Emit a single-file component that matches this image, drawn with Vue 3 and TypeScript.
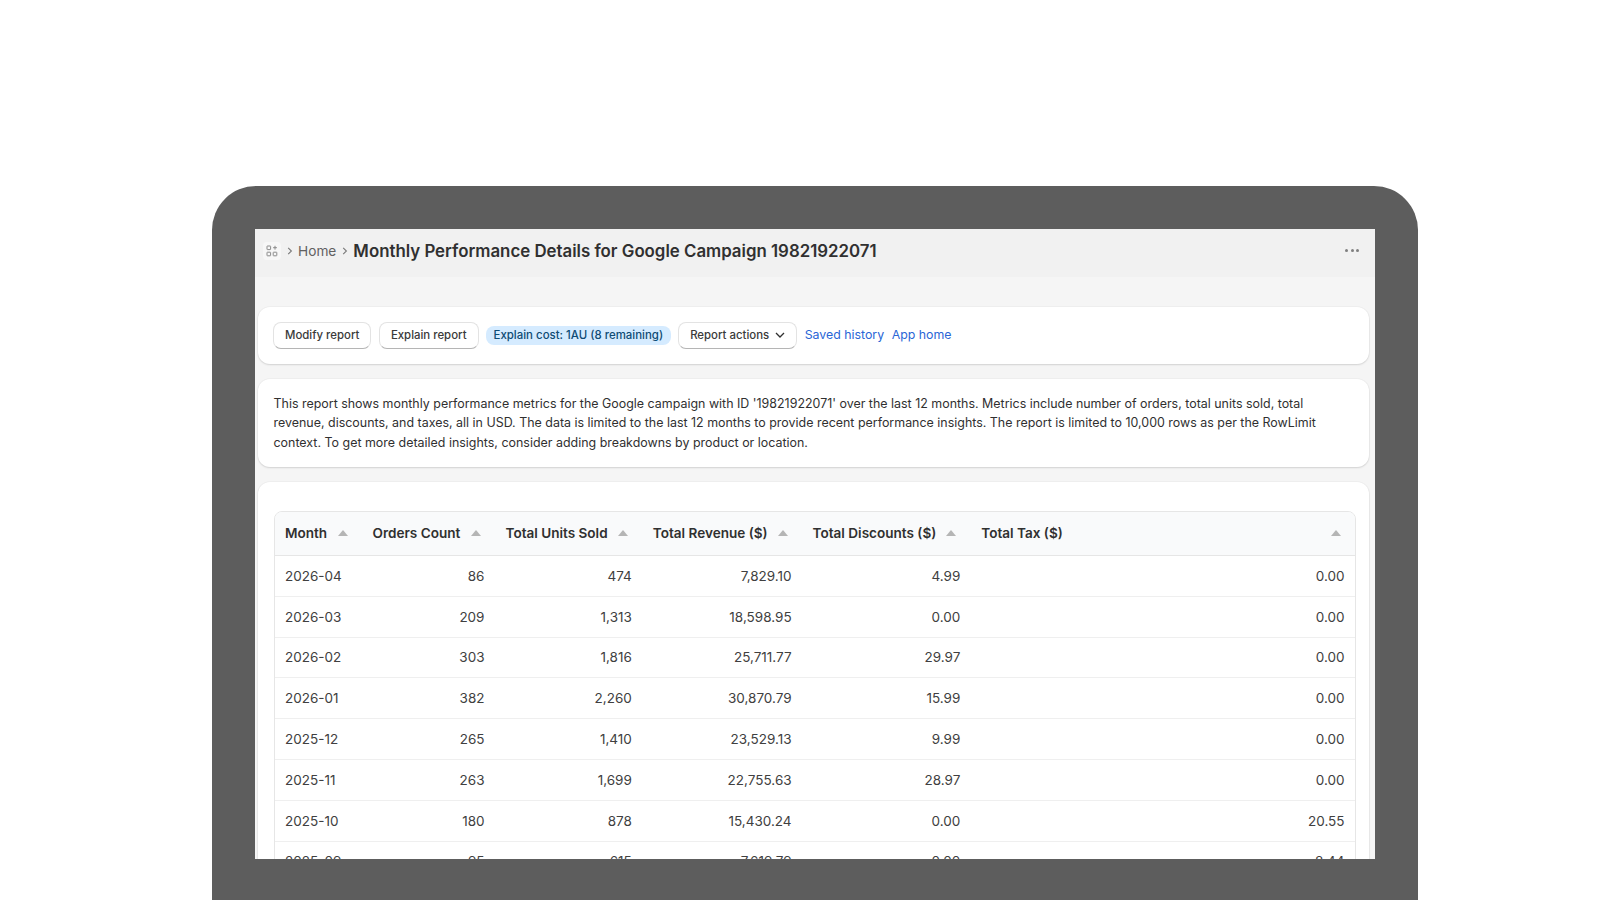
<script setup lang="ts">
interface Row { month: string; orders: string; units: string; revenue: string; discounts: string; tax: string }
const columns: string[] = ['Month', 'Orders Count', 'Total Units Sold', 'Total Revenue ($)', 'Total Discounts ($)', 'Total Tax ($)']
const rows: Row[] = [
  { month: '2026-04', orders: '86', units: '474', revenue: '7,829.10', discounts: '4.99', tax: '0.00' },
  { month: '2026-03', orders: '209', units: '1,313', revenue: '18,598.95', discounts: '0.00', tax: '0.00' },
  { month: '2026-02', orders: '303', units: '1,816', revenue: '25,711.77', discounts: '29.97', tax: '0.00' },
  { month: '2026-01', orders: '382', units: '2,260', revenue: '30,870.79', discounts: '15.99', tax: '0.00' },
  { month: '2025-12', orders: '265', units: '1,410', revenue: '23,529.13', discounts: '9.99', tax: '0.00' },
  { month: '2025-11', orders: '263', units: '1,699', revenue: '22,755.63', discounts: '28.97', tax: '0.00' },
  { month: '2025-10', orders: '180', units: '878', revenue: '15,430.24', discounts: '0.00', tax: '20.55' },
  { month: '2025-09', orders: '95', units: '615', revenue: '7,619.79', discounts: '0.00', tax: '8.44' },
]
</script>

<template>
  <div class="page">
    <div class="frame">
      <div class="screen">
        <header class="topbar">
          <span class="app-icon">
            <svg width="12" height="12" viewBox="0 0 12 12" fill="none" stroke="#8a8a8a" stroke-width="1">
              <rect x="1" y="1" width="3.6" height="3.6" rx="0.4" />
              <rect x="1" y="7.2" width="3.6" height="3.6" rx="0.4" />
              <rect x="7.2" y="7.2" width="3.6" height="3.6" rx="0.4" />
              <path d="M9 0.8v3.8M7.1 2.7h3.8" />
            </svg>
          </span>
          <svg class="crumb-chev first" width="6" height="10" viewBox="0 0 6 10" fill="none" stroke="#7a7a7a" stroke-width="1.1">
            <path d="M1.2 1.8 4.4 5 1.2 8.2" />
          </svg>
          <span class="crumb">Home</span>
          <svg class="crumb-chev" width="6" height="10" viewBox="0 0 6 10" fill="none" stroke="#7a7a7a" stroke-width="1.1">
            <path d="M1.2 1.8 4.4 5 1.2 8.2" />
          </svg>
          <h1 class="title">Monthly Performance Details for Google Campaign 19821922071</h1>
          <span class="dots"><i></i><i></i><i></i></span>
        </header>

        <main class="content">
          <section class="card actions">
            <button class="btn">Modify report</button>
            <button class="btn">Explain report</button>
            <span class="badge">Explain cost: 1AU (8 remaining)</span>
            <button class="btn">
              Report actions
              <svg class="chev" width="10" height="6" viewBox="0 0 10 6" fill="none" stroke="#303030" stroke-width="1.3">
                <path d="M1 1 5 5 9 1" />
              </svg>
            </button>
            <a class="link">Saved history</a>
            <a class="link">App home</a>
          </section>

          <section class="card description">
            This report shows monthly performance metrics for the Google campaign with ID '19821922071' over the last 12 months. Metrics include number of orders, total units sold, total revenue, discounts, and taxes, all in USD. The data is limited to the last 12 months to provide recent performance insights. The report is limited to 10,000 rows as per the RowLimit context. To get more detailed insights, consider adding breakdowns by product or location.
          </section>

          <section class="card table-card">
            <div class="table-wrap">
              <table>
                <thead>
                  <tr>
                    <th v-for="c in columns" :key="c">
                      <span class="th-inner">{{ c }}<i class="caret"></i></span>
                    </th>
                  </tr>
                </thead>
                <tbody>
                  <tr v-for="r in rows" :key="r.month">
                    <td>{{ r.month }}</td>
                    <td class="num">{{ r.orders }}</td>
                    <td class="num">{{ r.units }}</td>
                    <td class="num">{{ r.revenue }}</td>
                    <td class="num">{{ r.discounts }}</td>
                    <td class="num">{{ r.tax }}</td>
                  </tr>
                </tbody>
              </table>
            </div>
          </section>
        </main>
      </div>
    </div>
  </div>
</template>

<style>
html, body { margin: 0; background: #fff; overflow: hidden; }
</style>

<style scoped>
.page {
  box-sizing: border-box;
  height: 900px;
  padding: 186px 182px 0 212px;
  overflow: hidden;
  background: #fff;
  font-family: Inter, "Liberation Sans", sans-serif;
  color: #303030;
}
.frame {
  height: 714px;
  box-sizing: border-box;
  background: #5d5d5d;
  border-radius: 44px 44px 0 0;
  padding: 43px 43px 41px;
}
.screen {
  height: 630px;
  overflow: hidden;
  background: #f5f5f5;
}
.topbar {
  height: 48px;
  box-sizing: border-box;
  background: #f1f1f1;
  display: flex;
  align-items: center;
  padding: 0 16px 5px 8px;
}
.app-icon {
  width: 18px;
  height: 18px;
  border-radius: 4px;
  background: #f7f7f7;
  display: flex;
  align-items: center;
  justify-content: center;
}
.crumb-chev { margin: 0 5px 0 6px; }
.crumb-chev.first { margin: 0 5px 0 6px; }
.crumb { font-size: 13.7px; color: #616161; }
.title {
  margin: 0;
  font-size: 16.84px;
  font-weight: 600;
  color: #303030;
}
.dots { margin-left: auto; display: flex; gap: 2.5px; }
.dots i { width: 3px; height: 3px; border-radius: 50%; background: #7f7f7f; }
.content {
  padding: 30px 6px 0 3px;
  display: flex;
  flex-direction: column;
  gap: 15px;
}
.card {
  background: #fff;
  border-radius: 12px;
  box-shadow: 0 0 0 1px rgba(0, 0, 0, 0.025), 0 1px 2px rgba(0, 0, 0, 0.12);
}
.actions {
  height: 57px;
  box-sizing: border-box;
  padding: 0 15px;
  display: flex;
  align-items: center;
  gap: 7.5px;
}
.btn {
  height: 27px;
  box-sizing: border-box;
  padding: 0 11px 1px;
  border: 1px solid #e3e3e3;
  border-bottom-color: #b5b5b5;
  border-radius: 8px;
  background: #fff;
  font: 500 11.4px Inter, "Liberation Sans", sans-serif;
  color: #3a3a3a;
  display: flex;
  align-items: center;
  white-space: nowrap;
}
.chev { margin-left: 6px; }
.badge {
  padding: 0 7.5px 1px;
  height: 18px;
  border-radius: 8px;
  background: #d5ebff;
  color: #0f4c75;
  font-size: 11.45px;
  font-weight: 500;
  display: flex;
  align-items: center;
  white-space: nowrap;
}
.link { color: #2a66d6; font-size: 12.35px; white-space: nowrap; margin-bottom: 2px; }
.description {
  padding: 14.5px 15.5px;
  font-size: 12.44px;
  line-height: 19.5px;
  color: #303030;
}
.table-card { padding: 29px 13px 0 15.5px; border-radius: 12px 12px 0 0; }
.table-wrap {
  border: 1px solid #e6e6e6;
  border-radius: 8px 8px 0 0;
  overflow: hidden;
}
table {
  width: 100%;
  border-collapse: collapse;
  table-layout: fixed;
  font-size: 13.5px;
}
th:nth-child(1) { width: 87.5px; }
th:nth-child(2) { width: 133px; }
th:nth-child(3) { width: 147.3px; }
th:nth-child(4) { width: 159.8px; }
th:nth-child(5) { width: 168.7px; }
th {
  box-sizing: border-box;
  height: 44px;
  padding: 0 10.5px;
  background: #f9fafb;
  border-bottom: 1px solid #e6e6e6;
  text-align: left;
  font-size: 13.55px;
  font-weight: 600;
  color: #303030;
}
.th-inner {
  display: flex;
  align-items: center;
  justify-content: space-between;
  white-space: nowrap;
}
.caret {
  width: 0;
  height: 0;
  margin-right: 4px;
  border-left: 5.5px solid transparent;
  border-right: 5.5px solid transparent;
  border-bottom: 6px solid #b5b5b5;
}
td {
  height: 39.8px;
  padding: 0 10.5px;
  border-bottom: 1px solid #efefef;
  color: #404040;
  font-weight: 400;
}
.num { text-align: right; }
</style>
